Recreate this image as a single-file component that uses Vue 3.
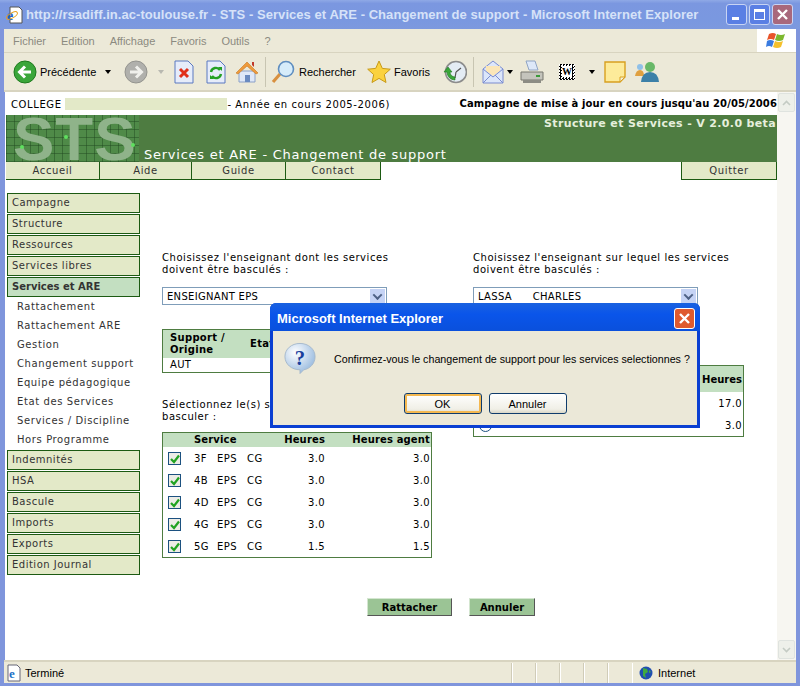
<template>
  <div class="window">
    <!-- barre de titre -->
    <div class="titlebar">
      <svg class="ie-doc" width="18" height="18" viewBox="0 0 18 18">
        <path d="M4 1h9l3 3v13H4z" fill="#fff" stroke="#555" />
        <text x="1" y="14" font-size="14" font-weight="700" fill="#1b5fc6" font-family="Liberation Serif">e</text>
        <ellipse cx="6" cy="9.500" rx="6" ry="2.500" fill="none" stroke="#e8a020" transform="rotate(-30 6 9.500)" />
      </svg>
      <span class="title-text">http://rsadiff.in.ac-toulouse.fr - STS - Services et ARE - Changement de support - Microsoft Internet Explorer</span>
      <div class="win-btns">
        <div class="win-btn"><i class="g-min"></i></div>
        <div class="win-btn"><i class="g-max"></i></div>
        <div class="win-btn close">
          <svg width="13" height="13" viewBox="0 0 13 13"><path d="M2 2l9 9M11 2l-9 9" stroke="#fff" stroke-width="2.400" /></svg>
        </div>
      </div>
    </div>

    <div class="menubar">
      <span v-for="m in menus" :key="m">{{ m }}</span>
      <div class="flag">
        <svg width="22" height="20" viewBox="0 0 22 20">
          <path d="M3 3q4-2 7 0l-2 6q-3-2-7 0z" fill="#e8542a" />
          <path d="M11 3q4 2 8 0l-2 6q-4 2-8 0z" fill="#7cb82f" />
          <path d="M1 10q3-2 7 0l-2 6q-3-2-6 0z" fill="#3a7be0" />
          <path d="M9 10q4 2 8 0l-2 6q-4 2-8 0z" fill="#f5c02c" />
        </svg>
      </div>
    </div>

    <div class="toolbar">
      <svg class="tb-ic first" width="24" height="24" viewBox="0 0 24 24">
        <circle cx="12" cy="12" r="11" fill="#3aa63a" stroke="#1d7a1d" />
        <path d="M18 12H8M12 6.500 6.500 12l5.500 5.500" fill="none" stroke="#fff" stroke-width="3" />
      </svg>
      <span class="tb-label prev">Précédente</span>
      <i class="caret"></i>
      <svg class="tb-ic forward" width="24" height="24" viewBox="0 0 24 24">
        <circle cx="12" cy="12" r="11" fill="#b0b0ac" stroke="#94948f" />
        <path d="M6 12h10M12 6.500l5.500 5.500-5.500 5.500" fill="none" stroke="#f0f0ec" stroke-width="3" />
      </svg>
      <i class="caret dim"></i>
      <svg class="tb-ic stop" width="20" height="24" viewBox="0 0 20 24">
        <path d="M1 1h13l5 5v17H1z" fill="#e6ecfa" stroke="#5a78c0" />
        <path d="M6 9l8 8M14 9l-8 8" stroke="#e0301c" stroke-width="3" />
      </svg>
      <svg class="tb-ic refresh" width="20" height="24" viewBox="0 0 20 24">
        <path d="M1 1h13l5 5v17H1z" fill="#e6ecfa" stroke="#5a78c0" />
        <path d="M5 12a5 5 0 0 1 9-2M15 14a5 5 0 0 1-9 2" fill="none" stroke="#24a024" stroke-width="2.400" />
        <path d="M12 7l4 0 0 4zM8 19l-4 0 0-4z" fill="#24a024" />
      </svg>
      <svg class="tb-ic home" width="24" height="24" viewBox="0 0 24 24">
        <path d="M4 11h16v11H4z" fill="#dfe8f8" stroke="#8aa0c8" />
        <path d="M1 13 12 2l11 11-2 1-9-8-9 8z" fill="#ee9a3c" stroke="#c87820" stroke-width=".6" />
        <path d="M10 15h5v7h-5z" fill="#6a8ac0" />
        <path d="M17 2h2v5l-2-2z" fill="#c0392b" />
      </svg>
      <i class="sep"></i>
      <svg class="tb-ic search" width="24" height="24" viewBox="0 0 24 24">
        <path d="M2 22l7-8" stroke="#d89040" stroke-width="3.200" />
        <circle cx="15" cy="9" r="7.500" fill="#d6ecfa" stroke="#5f8ec0" stroke-width="1.600" />
      </svg>
      <span class="tb-label find">Rechercher</span>
      <svg class="tb-ic star" width="24" height="24" viewBox="0 0 24 24">
        <path d="M12 1l3.300 7.400 8 .8-6 5.400 1.700 7.900-7-4.100-7 4.100 1.700-7.900-6-5.400 8-.8z" fill="#fbd23e" stroke="#c89a18" />
      </svg>
      <span class="tb-label fav">Favoris</span>
      <svg class="tb-ic history" width="24" height="24" viewBox="0 0 24 24">
        <circle cx="13" cy="12" r="10.500" fill="#e4ecf4" stroke="#8c8c8c" stroke-width="1.600" />
        <path d="M13 12l5-4M13 12l-1 6" stroke="#555" stroke-width="1.200" />
        <path d="M1 12l4-5 4 5-2 0a5 5 0 0 0 5 5l0 3a8 8 0 0 1-8-8z" fill="#3aa63a" stroke="#1d7a1d" stroke-width=".6" />
      </svg>
      <i class="sep second"></i>
      <svg class="tb-ic mail" width="22" height="24" viewBox="0 0 22 24">
        <path d="M1 9 11 1l10 8v14H1z" fill="#dce6fa" stroke="#7a8cd0" />
        <path d="M4 11V6h14v5l-7 5z" fill="#fbe6b8" />
        <path d="M1 9l10 8 10-8M1 23l8-8M21 23l-8-8" fill="none" stroke="#7a8cd0" />
      </svg>
      <i class="caret small"></i>
      <svg class="tb-ic printer" width="24" height="24" viewBox="0 0 24 24">
        <path d="M6 1h9l3 9H9z" fill="#dde8f8" stroke="#8fa4c4" />
        <path d="M1 12h22v8H1z" fill="#c4c4bc" stroke="#77776f" />
        <path d="M3 20h18v3H3z" fill="#8c8c84" />
        <path d="M16 15h4v2h-4z" fill="#3a9a3a" />
      </svg>
      <div class="tb-ic word"><span>W</span></div>
      <i class="caret word-caret"></i>
      <svg class="tb-ic note" width="22" height="22" viewBox="0 0 22 22">
        <path d="M1 1h20v15l-5 5H1z" fill="#fdeb9a" stroke="#d8a020" stroke-width="1.400" />
        <path d="M21 16h-5v5z" fill="#f4f0d8" stroke="#d8a020" />
      </svg>
      <svg class="tb-ic msn" width="26" height="22" viewBox="0 0 26 22">
        <circle cx="6" cy="6" r="3" fill="#8fc0e8" />
        <path d="M1 15q1-6 5-6t4 6z" fill="#e0a040" />
        <circle cx="16" cy="6" r="5" fill="#68b868" />
        <path d="M7 21q1-10 9-10t9 10z" fill="#3c80a8" />
      </svg>
    </div>

    <div class="viewport">
      <div class="page">
        <div class="college-row">
          <span class="college">COLLEGE <span class="blanked"></span>- Année en cours 2005-2006)</span>
          <b>Campagne de mise à jour en cours jusqu'au 20/05/2006</b>
        </div>
        <div class="banner">
          <div class="logo">
            <span>STS</span>
            <i class="dot d1"></i><i class="dot d2"></i><i class="dot d3"></i>
          </div>
          <div class="banner-title">Services et ARE - Changement de support</div>
          <div class="version">Structure et Services - V 2.0.0 beta</div>
        </div>
        <div class="tabs">
          <div v-for="t in tabs" :key="t.name" class="tab" :style="{ width: t.w + 'px' }">{{ t.name }}</div>
          <div class="tab quit">Quitter</div>
        </div>

        <div class="body-row">
          <div class="sidebar">
            <template v-for="s in sideMenu" :key="s.name">
              <div class="side-item" :class="{ active: s.active }">{{ s.name }}</div>
              <template v-if="s.subs">
                <div v-for="c in s.subs" :key="c" class="side-sub">{{ c }}</div>
              </template>
            </template>
          </div>

          <div class="content">
            <div class="columns">
              <div class="col">
                <p class="prompt">Choisissez l'enseignant dont les services<br />doivent être basculés :</p>
                <div class="select">ENSEIGNANT EPS<span class="sel-btn"><i></i></span></div>
                <table class="support">
                  <thead><tr><th>Support /<br />Origine</th><th>Etat</th></tr></thead>
                  <tbody><tr><td>AUT</td><td></td></tr></tbody>
                </table>
                <p class="prompt pick">Sélectionnez le(s) service(s) à<br />basculer :</p>
                <table class="services">
                  <thead>
                    <tr><th class="c-check"></th><th class="c-name">Service</th><th class="num c-hours">Heures</th><th class="num">Heures agent</th></tr>
                  </thead>
                  <tbody>
                    <tr v-for="r in services" :key="r.cls">
                      <td class="c-check">
                        <span class="check">
                          <svg width="10" height="10" viewBox="0 0 10 10"><path d="M1 5l3 3 5-6.500" fill="none" stroke="#21a321" stroke-width="2.200" /></svg>
                        </span>
                      </td>
                      <td class="c-name"><span class="cls">{{ r.cls }}</span><span class="eps">EPS</span>CG</td>
                      <td class="num">{{ r.h }}</td>
                      <td class="num">{{ r.h }}</td>
                    </tr>
                  </tbody>
                </table>
              </div>
              <div class="col right">
                <p class="prompt">Choisissez l'enseignant sur lequel les services<br />doivent être basculés :</p>
                <div class="select">LASSA&nbsp;&nbsp;&nbsp;&nbsp;&nbsp;&nbsp;CHARLES<span class="sel-btn"><i></i></span></div>
                <table class="target">
                  <thead><tr><th></th><th class="num">Heures</th></tr></thead>
                  <tbody>
                    <tr><td></td><td class="num">17.0</td></tr>
                    <tr><td><i class="radio"></i></td><td class="num">3.0</td></tr>
                  </tbody>
                </table>
              </div>
            </div>
            <div class="actions">
              <button class="act rattacher">Rattacher</button>
              <button class="act annuler">Annuler</button>
            </div>
          </div>
        </div>

        <!-- boite de confirmation -->
        <div class="dialog">
          <div class="dlg-title">
            <span>Microsoft Internet Explorer</span>
            <div class="dlg-close">
              <svg width="13" height="13" viewBox="0 0 13 13"><path d="M2 2l9 9M11 2l-9 9" stroke="#fff" stroke-width="2.400" /></svg>
            </div>
          </div>
          <div class="dlg-body">
            <div class="dlg-msg">
              <svg class="dlg-ic" width="32" height="33" viewBox="0 0 34 34">
                <defs>
                  <radialGradient id="bub" cx=".35" cy=".3" r=".8"><stop offset="0" stop-color="#fff" /><stop offset="1" stop-color="#8fb4dc" /></radialGradient>
                </defs>
                <path d="M17 1c9 0 16 6 16 14s-6 13-12 14l-4 4 0-4C8 29 1 23 1 15S8 1 17 1z" fill="url(#bub)" stroke="#a4b8cc" />
                <text x="17" y="24" text-anchor="middle" font-size="22" font-weight="700" fill="#1a3f9c" font-family="Liberation Serif">?</text>
              </svg>
              <span>Confirmez-vous le changement de support pour les services selectionnes ?</span>
            </div>
            <div class="dlg-btns">
              <button class="xp-btn default">OK</button>
              <button class="xp-btn">Annuler</button>
            </div>
          </div>
        </div>
      </div>

      <div class="scrollbar">
        <div class="sb-btn"><svg width="9" height="6" viewBox="0 0 9 6"><path d="M1 5l3.500-3.500L8 5" fill="none" stroke="#c4cbc4" stroke-width="1.600" /></svg></div>
        <div class="sb-btn"><svg width="9" height="6" viewBox="0 0 9 6"><path d="M1 1l3.500 3.500L8 1" fill="none" stroke="#c4cbc4" stroke-width="1.600" /></svg></div>
      </div>
    </div>

    <div class="statusbar">
      <svg width="16" height="18" viewBox="0 0 16 18">
        <path d="M2 1h9l3 3v13H2z" fill="#fff" stroke="#667" />
        <text x="3" y="14" font-size="13" font-weight="700" fill="#1b6fc6" font-family="Liberation Serif">e</text>
      </svg>
      <span class="st-text">Terminé</span>
      <div class="st-cells"><i v-for="n in 5" :key="n"></i></div>
      <div class="st-zone">
        <svg width="14" height="14" viewBox="0 0 14 14">
          <circle cx="7" cy="7" r="6.500" fill="#1f4fb0" />
          <path d="M4 2l4 1 1 3-3 2 1 4-3-2zM10 4l2 2-2 1z" fill="#3faa3f" />
        </svg>
        <span>Internet</span>
      </div>
    </div>
  </div>
</template>

<script setup>
const menus = ['Fichier', 'Edition', 'Affichage', 'Favoris', 'Outils', '?']

const tabs = [
  { name: 'Accueil', w: 94 },
  { name: 'Aide', w: 92 },
  { name: 'Guide', w: 94 },
  { name: 'Contact', w: 95 }
]

const sideMenu = [
  { name: 'Campagne' },
  { name: 'Structure' },
  { name: 'Ressources' },
  { name: 'Services libres' },
  {
    name: 'Services et ARE',
    active: true,
    subs: ['Rattachement', 'Rattachement ARE', 'Gestion', 'Changement support', 'Equipe pédagogique', 'Etat des Services', 'Services / Discipline', 'Hors Programme']
  },
  { name: 'Indemnités' },
  { name: 'HSA' },
  { name: 'Bascule' },
  { name: 'Imports' },
  { name: 'Exports' },
  { name: 'Edition Journal' }
]

const services = [
  { cls: '3F', h: '3.0' },
  { cls: '4B', h: '3.0' },
  { cls: '4D', h: '3.0' },
  { cls: '4G', h: '3.0' },
  { cls: '5G', h: '1.5' }
]
</script>

<style scoped>
.window {
  width: 800px;
  height: 686px;
  display: flex;
  flex-direction: column;
  overflow: hidden;
  background: #7f95dc;
  padding-bottom: 3px;
  box-sizing: border-box;
  font-family: "DejaVu Sans", Verdana, sans-serif;
  color: #000;
}

.titlebar {
  height: 29px;
  flex-shrink: 0;
  display: flex;
  align-items: center;
  padding: 0 7px 0 6px;
  background: linear-gradient(180deg, #8fa9e6 0%, #7b97e0 12%, #7a98e0 70%, #7d99de 100%);
}
.ie-doc { flex-shrink: 0; }
.title-text {
  margin-left: 2px;
  font: bold 13px "Liberation Sans", sans-serif;
  color: #d6e2f8;
  white-space: nowrap;
  letter-spacing: .05px;
}
.win-btns { margin-left: auto; display: flex; gap: 2px; flex-shrink: 0; }
.win-btn {
  width: 21px;
  height: 21px;
  box-sizing: border-box;
  border: 1px solid #c8d4f4;
  border-radius: 3px;
  background: #5a7fe4;
  display: flex;
  align-items: center;
  justify-content: center;
  position: relative;
}
.win-btn.close { background: #a8687c; }
.g-min { position: absolute; left: 5px; bottom: 4px; width: 7px; height: 3px; background: #fff; }
.g-max { width: 11px; height: 11px; box-sizing: border-box; border: 1px solid #fff; border-top-width: 3px; }

.menubar {
  height: 23px;
  margin: 0 4px;
  flex-shrink: 0;
  display: flex;
  align-items: center;
  gap: 15px;
  padding-left: 9px;
  font: 11px "Liberation Sans", sans-serif;
  color: #8b8a80;
  background: #ece9d8;
  border-bottom: 1px solid #d8d4c0;
}
.flag {
  margin-left: auto;
  width: 39px;
  height: 23px;
  background: #fff;
  display: flex;
  align-items: center;
  justify-content: center;
}

.toolbar {
  height: 39px;
  margin: 0 4px;
  flex-shrink: 0;
  display: flex;
  align-items: center;
  font: 11px "Liberation Sans", sans-serif;
  background: #ece9d8;
  border-bottom: 2px solid #d8d4c0;
  box-sizing: border-box;
}
.tb-ic { flex-shrink: 0; }
.first { margin-left: 9px; }
.tb-label { white-space: nowrap; flex-shrink: 0; }
.prev { margin-left: 3px; width: 56px; }
.find { margin-left: 4px; width: 56px; }
.fav { margin-left: 3px; width: 36px; }
.caret {
  width: 0;
  height: 0;
  border: 3px solid transparent;
  border-top: 4px solid #000;
  border-bottom: 0;
  margin-left: 9px;
  flex-shrink: 0;
}
.caret.dim { border-top-color: #b8b8b0; margin-left: 10px; }
.caret.small { margin-left: 3px; }
.forward { margin-left: 13px; }
.stop { margin-left: 10px; }
.refresh { margin-left: 12px; }
.home { margin-left: 9px; }
.sep { width: 1px; height: 30px; background: #c8c5b2; margin-left: 6px; flex-shrink: 0; }
.search { margin-left: 5px; }
.star { margin-left: 12px; }
.history { margin-left: 13px; }
.mail { margin-left: 8px; }
.printer { margin-left: 7px; }
.word {
  margin-left: 15px;
  width: 16px;
  height: 16px;
  display: flex;
  align-items: center;
  justify-content: center;
  background: repeating-conic-gradient(#000 0 25%, #fff 0 50%) 0 0 / 3px 3px;
}
.word span {
  width: 10px;
  height: 11px;
  background: #fff;
  font: bold 10px/11px "Liberation Serif", serif;
  text-align: center;
}
.word-caret { margin-left: 14px; }
.note { margin-left: 9px; }
.msn { margin-left: 8px; }

.viewport {
  flex: 1;
  min-height: 0;
  display: flex;
  margin: 0 4px 0 5px;
  background: #fff;
}
.page {
  position: relative;
  width: 772px;
  flex-shrink: 0;
  font-size: 10px;
  overflow: hidden;
}
.college-row {
  height: 23px;
  padding: 0 0 0 6px;
  display: flex;
  align-items: center;
  justify-content: space-between;
  white-space: nowrap;
}
.college { letter-spacing: .6px; }
.college-row b { letter-spacing: .1px; }
.blanked {
  display: inline-block;
  width: 162px;
  height: 12px;
  background: #e3e9c8;
  vertical-align: -2px;
  margin-left: 0;
}

.banner {
  position: relative;
  height: 47px;
  margin-left: 1px;
  background: #4e7c41;
  color: #fff;
  overflow: hidden;
  white-space: nowrap;
}
.logo {
  position: absolute;
  left: 0;
  top: 0;
  width: 133px;
  height: 47px;
  overflow: hidden;
  background:
    repeating-linear-gradient(90deg, rgba(30, 70, 30, .45) 0 1px, transparent 1px 8px),
    repeating-linear-gradient(0deg, rgba(30, 70, 30, .45) 0 1px, transparent 1px 8px),
    #4f8a48;
}
.logo span {
  position: absolute;
  left: 7px;
  top: 0;
  height: 47px;
  font: bold 62px/47px "Liberation Sans", sans-serif;
  color: #8fb38a;
  letter-spacing: 1px;
}
.dot { position: absolute; width: 4px; height: 4px; border-radius: 50%; background: #5fe05f; }
.d1 { left: 58px; top: 20px; }
.d2 { left: 14px; top: 30px; }
.d3 { left: 125px; top: 28px; }
.banner-title {
  position: absolute;
  left: 138px;
  bottom: -1px;
  font-size: 13px;
  letter-spacing: .75px;
  line-height: 16px;
  font-weight: 500;
}
.version {
  position: absolute;
  right: 1px;
  top: 2px;
  font-size: 11px;
  font-weight: 700;
  letter-spacing: .35px;
  color: #e6efdd;
}

.tabs {
  height: 18px;
  margin-left: 1px;
  display: flex;
}
.tab {
  box-sizing: border-box;
  border: 1px solid #1c5a12;
  border-top: 0;
  border-left-width: 0;
  background: #e3e9c8;
  text-align: center;
  line-height: 18px;
  letter-spacing: .6px;
  color: #333;
}
.quit { margin-left: auto; width: 96px; border-left-width: 1px; }

.body-row {
  display: flex;
  padding-top: 13px;
}
.sidebar {
  width: 133px;
  margin-left: 2px;
  flex-shrink: 0;
}
.side-item {
  box-sizing: border-box;
  height: 20px;
  margin-bottom: 1px;
  border: 1px solid #1c5a12;
  background: #e3e9c8;
  padding-left: 4px;
  line-height: 18px;
  letter-spacing: .5px;
  color: #333;
}
.side-item.active { background: #c3dfc1; font-weight: 700; letter-spacing: 0; margin-bottom: 0; }
.side-sub + .side-item { margin-top: 1px; }
.side-sub {
  height: 19px;
  padding-left: 10px;
  line-height: 19px;
  letter-spacing: .6px;
  color: #333;
}

.content { flex: 1; min-width: 0; }
.columns {
  display: flex;
  padding: 59px 0 0 22px;
  height: 405px;
  box-sizing: border-box;
}
.col { width: 311px; flex-shrink: 0; }
.prompt {
  margin: 0;
  line-height: 12px;
  letter-spacing: .55px;
  white-space: nowrap;
}
.select {
  position: relative;
  box-sizing: border-box;
  width: 225px;
  height: 18px;
  margin-top: 11px;
  border: 1px solid #7f9db9;
  padding-left: 4px;
  line-height: 18px;
  letter-spacing: .3px;
}
.sel-btn {
  position: absolute;
  right: 1px;
  top: 1px;
  width: 15px;
  height: 14px;
  background: #c5d3f5;
  display: flex;
  align-items: center;
  justify-content: center;
}
.sel-btn i {
  width: 5px;
  height: 5px;
  border: solid #4d6185;
  border-width: 0 2px 2px 0;
  transform: rotate(45deg) translate(-1px, -1px);
}

table { border-collapse: collapse; font-size: 10px; }
th { font-weight: 700; text-align: left; background: #c3dfc1; }
.num { text-align: right; }

.support {
  width: 269px;
  margin-top: 24px;
  border: 1px solid #4e7c41;
  line-height: 12px;
}
.support th { padding: 2px 7px; letter-spacing: .3px; }
.support th:first-child { width: 66px; }
.support td { padding: 1px 7px; height: 12px; letter-spacing: .3px; }

.prompt.pick { margin-top: 26px; }
.services {
  width: 270px;
  margin-top: 9px;
  border: 1px solid #4e7c41;
}
.services th { height: 14px; padding: 0 1px; letter-spacing: .15px; line-height: 14px; }
.services td { height: 22px; padding: 0 1px; letter-spacing: .4px; }
.c-check { width: 24px; }
.c-name { width: 80px; }
.c-hours { width: 49px; }
.c-check { padding-left: 5px !important; }
.cls { display: inline-block; width: 23px; }
.eps { display: inline-block; width: 30px; }
.check {
  display: block;
  box-sizing: border-box;
  width: 13px;
  height: 13px;
  border: 1px solid #1c5180;
  background: #ecece6;
  padding: 1px;
}
.check svg { display: block; }

.target {
  width: 271px;
  margin-top: 60px;
  border: 1px solid #4e7c41;
}
.target th { height: 26px; padding: 0 1px; }
.target td { height: 20px; padding: 1px; letter-spacing: .4px; }
.radio {
  display: block;
  width: 11px;
  height: 11px;
  margin-left: 4px;
  margin-top: 1px;
  border: 1px solid #1c5180;
  border-radius: 50%;
}

.actions {
  display: flex;
  gap: 17px;
  padding-left: 227px;
}
.act {
  height: 18px;
  padding: 0;
  background: #9bc495;
  border: 1px solid;
  border-color: #d4e6d0 #555 #555 #d4e6d0;
  font: bold 10px "DejaVu Sans", sans-serif;
  color: #000;
}
.rattacher { width: 85px; }
.annuler { width: 66px; }

.dialog {
  position: absolute;
  left: 265px;
  top: 211px;
  width: 430px;
  height: 125px;
  box-sizing: border-box;
  border-radius: 6px 6px 0 0;
  background: #0a3fd2;
  padding: 0 3px 3px;
  display: flex;
  flex-direction: column;
}
.dlg-title {
  height: 28px;
  flex-shrink: 0;
  box-sizing: border-box;
  display: flex;
  align-items: center;
  justify-content: space-between;
  color: #fff;
  font: bold 13px "Liberation Sans", sans-serif;
  background: linear-gradient(180deg, #1a62e0 0%, #0a55ea 40%, #0a50dc 100%);
  margin: 0 -3px;
  padding: 2px 5px 0 7px;
  border-radius: 6px 6px 0 0;
}
.dlg-close {
  width: 21px;
  height: 21px;
  box-sizing: border-box;
  border: 1px solid #fff;
  border-radius: 3px;
  background: #df5a2e;
  display: flex;
  align-items: center;
  justify-content: center;
}
.dlg-body {
  flex: 1;
  background: #ebe8d8;
  display: flex;
  flex-direction: column;
}
.dlg-msg {
  display: flex;
  align-items: flex-start;
  padding: 11px 0 0 11px;
  font: 10.700px "Liberation Sans", sans-serif;
  white-space: nowrap;
}
.dlg-ic { flex-shrink: 0; }
.dlg-msg span { margin: 11px 0 0 18px; }
.dlg-btns {
  display: flex;
  justify-content: center;
  gap: 7px;
  margin-top: 18px;
}
.xp-btn {
  width: 78px;
  height: 21px;
  padding: 0;
  box-sizing: border-box;
  border: 1px solid #0f3c6c;
  border-radius: 3px;
  background: linear-gradient(180deg, #fff, #f0efe6 80%, #d9d6c6);
  font: 11px "Liberation Sans", sans-serif;
  color: #000;
}
.xp-btn.default { box-shadow: inset 0 0 0 2px #f4b850; }

.scrollbar {
  flex: 1;
  display: flex;
  flex-direction: column;
  justify-content: space-between;
  background: #f7f6f1;
}
.sb-btn {
  height: 17px;
  margin: 1px;
  border: 1px solid #dfe3df;
  border-radius: 2px;
  background: #eef0ea;
  display: flex;
  align-items: center;
  justify-content: center;
}

.statusbar {
  height: 23px;
  flex-shrink: 0;
  margin: 0 4px;
  display: flex;
  align-items: center;
  padding: 0 16px 0 2px;
  box-sizing: border-box;
  border-top: 2px solid #d8d4c0;
  background: #ece9d8;
  font: 11px "Liberation Sans", sans-serif;
}
.st-text { margin-left: 3px; }
.st-cells {
  margin-left: auto;
  display: flex;
  height: 20px;
}
.st-cells i { width: 23px; border-left: 1px solid #fff; box-shadow: -1px 0 0 #d0ccb8; }
.st-zone {
  width: 148px;
  display: flex;
  align-items: center;
  gap: 5px;
  padding-left: 6px;
  height: 20px;
  box-sizing: border-box;
  border-left: 1px solid #fff;
}
</style>

<style>
html, body { margin: 0; background: #7f95dc; }
</style>
